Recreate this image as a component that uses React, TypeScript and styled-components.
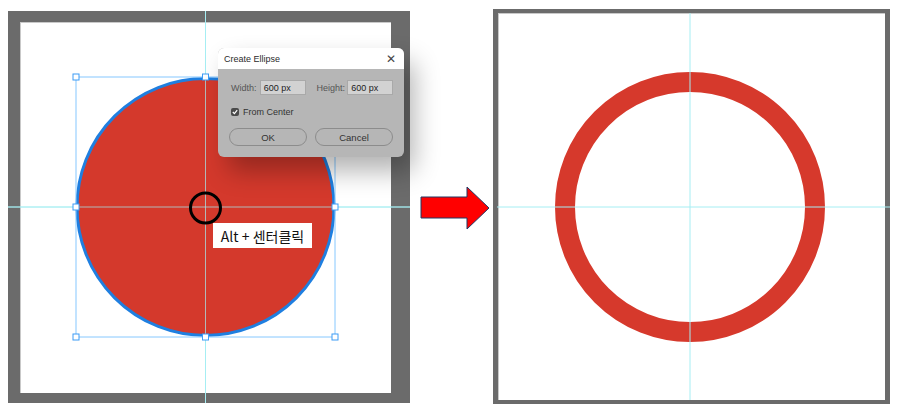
import React from "react";
import styled, { createGlobalStyle } from "styled-components";

const GlobalStyle = createGlobalStyle`
  body {
    margin: 0;
    background: #ffffff;
    font-family: "Liberation Sans", Arial, sans-serif;
  }
`;

const Page = styled.div`
  width: 904px;
  height: 414px;
  display: flex;
  align-items: flex-start;
  padding-left: 8px;
  box-sizing: border-box;
`;

const Frame = styled.div<{ $top: number }>`
  position: relative;
  margin-top: ${(p) => p.$top}px;
  background: #6b6b6b;
  box-sizing: border-box;
`;

const LeftFrame = styled(Frame)`
  width: 402px;
  height: 392px;
  padding: 11px 19px 10px 12px;
`;

const RightFrame = styled(Frame)`
  width: 397px;
  height: 395px;
  padding: 4px 5px 4px 5px;
`;

const Canvas = styled.div`
  width: 100%;
  height: 100%;
  background: #ffffff;
  box-shadow: inset 1px 1px 0 #c9c9c9;
`;

const Overlay = styled.svg`
  position: absolute;
  left: 0;
  top: 0;
`;

const ArrowBox = styled.div`
  width: 83px;
  height: 414px;
  display: flex;
  align-items: center;
  justify-content: flex-start;
  padding: 2px 0 0 10px;
  box-sizing: border-box;
`;

const Dialog = styled.div`
  position: absolute;
  left: 210px;
  top: 37px;
  width: 186px;
  height: 109px;
  border-radius: 6px;
  overflow: hidden;
  background: #b6b6b6;
  box-shadow: 10px 14px 26px rgba(0, 0, 0, 0.3);
  font-size: 9px;
  color: #3a3a3a;
`;

const TitleBar = styled.div`
  height: 21px;
  background: #ffffff;
  display: flex;
  align-items: center;
  justify-content: space-between;
  padding: 1px 8px 0 6px;
  box-sizing: border-box;
`;

const Title = styled.span`
  color: #2b2b2b;
`;

const CloseX = styled.span`
  font-family: "DejaVu Sans", sans-serif;
  font-size: 12px;
  color: #444;
  line-height: 1;
`;

const Body = styled.div`
  padding: 11px 11px 0 13px;
  display: flex;
  flex-direction: column;
`;

const FieldRow = styled.div`
  display: flex;
  align-items: center;
  height: 15px;
`;

const Label = styled.span<{ $w: number }>`
  width: ${(p) => p.$w}px;
  color: #555;
`;

const Input = styled.div<{ $gap: number }>`
  width: 46px;
  height: 15px;
  box-sizing: border-box;
  background: #d2d2d2;
  border: 1px solid #a9a9a9;
  padding-left: 3px;
  display: flex;
  align-items: center;
  color: #222;
  margin-right: ${(p) => p.$gap}px;
`;

const CheckRow = styled.div`
  display: flex;
  align-items: center;
  margin-top: 12px;
  gap: 4px;
  color: #333;
`;

const Check = styled.div`
  width: 8px;
  height: 8px;
  border-radius: 2px;
  background: #4a4a4a;
  display: flex;
  align-items: center;
  justify-content: center;
`;

const ButtonRow = styled.div`
  display: flex;
  gap: 8px;
  margin-top: 11px;
  margin-left: -2px;
`;

const PillButton = styled.div`
  width: 78px;
  height: 18px;
  box-sizing: border-box;
  border: 1px solid #8c8c8c;
  border-radius: 9px;
  display: flex;
  align-items: center;
  justify-content: center;
  color: #333;
  font-size: 9.5px;
`;

const Tag = styled.div`
  position: absolute;
  left: 205px;
  top: 212px;
  width: 99px;
  height: 25px;
  background: #ffffff;
  display: flex;
  align-items: center;
  justify-content: center;
  font-family: "Noto Sans CJK KR", "Noto Sans", sans-serif;
  font-size: 14px;
  color: #111;
  padding-top: 1px;
  box-sizing: border-box;
`;

const guide = "#a6eef3";
const box = "#86c8ff";

function Handle({ x, y }: { x: number; y: number }) {
  return (
    <rect
      x={x - 3}
      y={y - 3}
      width={6}
      height={6}
      fill="#fff"
      stroke="#3d9cf5"
      strokeWidth={1}
    />
  );
}

function LeftPanel() {
  const cx = 197.5;
  const cy = 196;
  const l = 68;
  const r = 327;
  const t = 66;
  const b = 326;
  return (
    <LeftFrame $top={11}>
      <Canvas />
      <Overlay width={402} height={392}>
        <line x1={0} y1={cy} x2={402} y2={cy} stroke={guide} strokeWidth={1} />
        <line x1={cx} y1={0} x2={cx} y2={392} stroke={guide} strokeWidth={1} />
        <ellipse cx={cx} cy={cy} rx={128.5} ry={128.5} fill="#d4392c" stroke="#1f7fe0" strokeWidth={3} />
        <line x1={cx} y1={0} x2={cx} y2={392} stroke={guide} strokeWidth={1} opacity={0.7} />
        <line x1={0} y1={cy} x2={402} y2={cy} stroke={guide} strokeWidth={1} opacity={0.7} />
        <rect x={l} y={t} width={r - l} height={b - t} fill="none" stroke={box} strokeWidth={1} />
        {[l, cx, r].map((x) =>
          [t, cy, b].map((y) =>
            x === cx && y === cy ? null : <Handle key={`${x}-${y}`} x={x} y={y} />
          )
        )}
        <circle cx={cx} cy={cy + 1} r={15} fill="none" stroke="#000" strokeWidth={3} />
      </Overlay>
      <Dialog>
        <TitleBar>
          <Title>Create Ellipse</Title>
          <CloseX>✕</CloseX>
        </TitleBar>
        <Body>
          <FieldRow>
            <Label $w={29}>Width:</Label>
            <Input $gap={11}>600 px</Input>
            <Label $w={31}>Height:</Label>
            <Input $gap={0}>600 px</Input>
          </FieldRow>
          <CheckRow>
            <Check>
              <svg width="6" height="6" viewBox="0 0 6 6">
                <path d="M0.8 3 L2.4 4.6 L5.2 1.2" stroke="#fff" strokeWidth="1.2" fill="none" />
              </svg>
            </Check>
            From Center
          </CheckRow>
          <ButtonRow>
            <PillButton>OK</PillButton>
            <PillButton>Cancel</PillButton>
          </ButtonRow>
        </Body>
      </Dialog>
      <Tag>Alt + 센터클릭</Tag>
    </LeftFrame>
  );
}

function RightPanel() {
  return (
    <RightFrame $top={9}>
      <Canvas />
      <Overlay width={397} height={395}>
        <circle cx={197} cy={198} r={125} fill="none" stroke="#d6392c" strokeWidth={20} />
        <line x1={4} y1={198} x2={397} y2={198} stroke={guide} strokeWidth={1} />
        <line x1={197} y1={4} x2={197} y2={391} stroke={guide} strokeWidth={1} />
      </Overlay>
    </RightFrame>
  );
}

function Arrow() {
  return (
    <ArrowBox>
      <svg width="70" height="44" viewBox="0 0 70 44">
        <polygon
          points="1,11 47,11 47,1 69,22 47,43 47,32 1,32"
          fill="#ff0000"
          stroke="#1f3864"
          strokeWidth={1}
        />
      </svg>
    </ArrowBox>
  );
}

export default function App() {
  return (
    <>
      <GlobalStyle />
      <Page>
        <LeftPanel />
        <Arrow />
        <RightPanel />
      </Page>
    </>
  );
}
